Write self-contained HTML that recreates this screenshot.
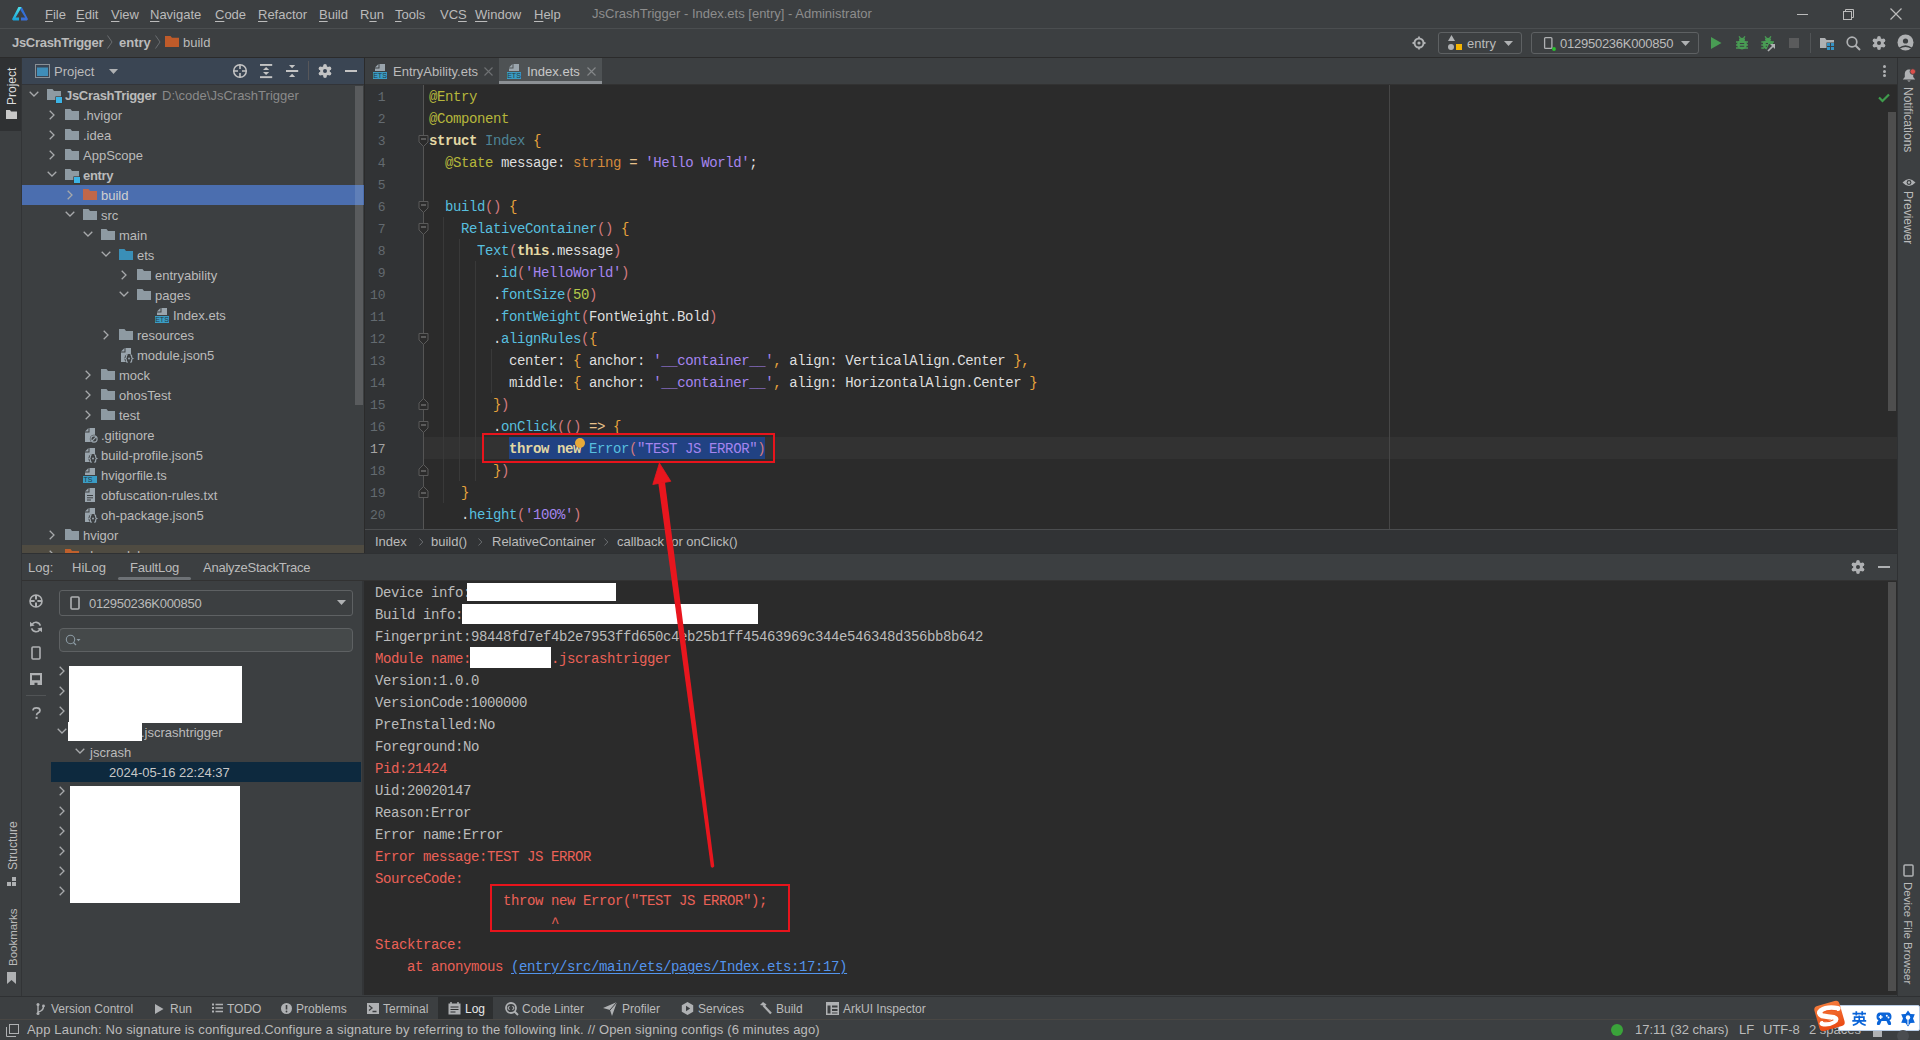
<!DOCTYPE html>
<html><head><meta charset="utf-8">
<style>
*{margin:0;padding:0;box-sizing:border-box}
html,body{width:1920px;height:1040px;overflow:hidden;background:#3c3f41}
body{position:relative;font-family:"Liberation Sans",sans-serif;font-size:13px;color:#bbbbbb}
.a{position:absolute}
.t{position:absolute;white-space:pre;line-height:16px}
.r{position:absolute;white-space:pre;line-height:20px;height:20px}
.m{font-family:"Liberation Mono",monospace;font-size:14px;letter-spacing:-0.4px}
.ln{position:absolute;white-space:pre;line-height:22px;height:22px}
svg{position:absolute;overflow:visible;z-index:3}
u{text-decoration:underline;text-underline-offset:2px}
</style></head><body>
<!-- TITLE BAR -->
<div class="a" style="left:0;top:28px;width:1920px;height:1px;background:#4b4e50"></div>
<div class="a" style="left:0;top:57px;width:1920px;height:1px;background:#2b2b2b"></div>
<svg style="left:0;top:0" width="40" height="28" viewBox="0 0 40 28">
<defs><linearGradient id="lg1" x1="0" y1="0" x2="0" y2="1"><stop offset="0" stop-color="#4fe0ea"/><stop offset="1" stop-color="#16a0d8"/></linearGradient>
<linearGradient id="lg2" x1="0" y1="0" x2="1" y2="1"><stop offset="0" stop-color="#2a6fd6"/><stop offset="1" stop-color="#3f6fd8"/></linearGradient></defs>
<path d="M18.4 7 L21.8 7 L15.6 17.6 L19 17.6 L19 20.6 L13.2 20.6 L12 19.2 Z" fill="url(#lg1)"/>
<path d="M21.8 7 L20.2 9.8 L25.2 17.6 L21 17.6 L21 20.6 L26.8 20.6 L28 19.2 Z" fill="url(#lg2)"/>
</svg>
<div class="t" style="left:45px;top:7px"><u>F</u>ile</div>
<div class="t" style="left:76px;top:7px"><u>E</u>dit</div>
<div class="t" style="left:111px;top:7px"><u>V</u>iew</div>
<div class="t" style="left:150px;top:7px"><u>N</u>avigate</div>
<div class="t" style="left:215px;top:7px"><u>C</u>ode</div>
<div class="t" style="left:258px;top:7px"><u>R</u>efactor</div>
<div class="t" style="left:319px;top:7px"><u>B</u>uild</div>
<div class="t" style="left:360px;top:7px">R<u>u</u>n</div>
<div class="t" style="left:395px;top:7px"><u>T</u>ools</div>
<div class="t" style="left:440px;top:7px">VC<u>S</u></div>
<div class="t" style="left:475px;top:7px"><u>W</u>indow</div>
<div class="t" style="left:534px;top:7px"><u>H</u>elp</div>
<div class="t" style="left:592px;top:6px;color:#8d8d8d">JsCrashTrigger - Index.ets [entry] - Administrator</div>
<div class="a" style="left:1797px;top:14px;width:11px;height:1px;background:#bbbbbb"></div>
<svg style="left:1843px;top:9px" width="12" height="12" viewBox="0 0 12 12"><rect x="0.5" y="2.5" width="8" height="8" fill="none" stroke="#bbb"/><path d="M2.5 2.5 V0.5 H10.5 V8.5 H8.5" fill="none" stroke="#bbb"/></svg>
<svg style="left:1890px;top:8px" width="12" height="12" viewBox="0 0 12 12"><path d="M0.5 0.5 L11.5 11.5 M11.5 0.5 L0.5 11.5" stroke="#bbb" stroke-width="1.2"/></svg>

<!-- NAV BAR -->
<div class="t" style="left:12px;top:35px;font-weight:bold;letter-spacing:-0.3px">JsCrashTrigger</div>
<svg style="left:106px;top:35px" width="8" height="14"><path d="M1.5 0.5 L6 7 L1.5 13.5" fill="none" stroke="#6a6d70" stroke-width="1"/></svg>
<div class="t" style="left:119px;top:35px;font-weight:bold">entry</div>
<svg style="left:154px;top:35px" width="8" height="14"><path d="M1.5 0.5 L6 7 L1.5 13.5" fill="none" stroke="#6a6d70" stroke-width="1"/></svg>
<svg style="left:165px;top:36px" width="14" height="11" viewBox="0 0 14 11"><path d="M0 0 H5.5 L7 1.8 H14 V11 H0 Z" fill="#bf5b2a"/></svg>
<div class="t" style="left:183px;top:35px">build</div>

<svg style="left:1412px;top:36px" width="14" height="14" viewBox="0 0 14 14"><circle cx="7" cy="7" r="4.5" fill="none" stroke="#afb1b3" stroke-width="2"/><circle cx="7" cy="7" r="1.6" fill="#afb1b3"/><path d="M7 0.5 V2.5 M7 11.5 V13.5 M0.5 7 H2.5 M11.5 7 H13.5" stroke="#afb1b3" stroke-width="1.8"/></svg>
<div class="a" style="left:1438px;top:32px;width:84px;height:22px;border:1px solid #5e6163;border-radius:3px"></div>
<svg style="left:1447px;top:35px" width="16" height="16" viewBox="0 0 16 16"><path d="M4.5 0 L8 6 H1 Z" fill="#afb1b3"/><circle cx="4" cy="12" r="3" fill="#afb1b3"/><rect x="9" y="9" width="6" height="6" fill="#f4b400"/></svg>
<div class="t" style="left:1467px;top:36px">entry</div>
<svg style="left:1504px;top:41px" width="9" height="5"><path d="M0 0 H9 L4.5 5 Z" fill="#afb1b3"/></svg>
<div class="a" style="left:1531px;top:32px;width:168px;height:22px;border:1px solid #5e6163;border-radius:3px"></div>
<svg style="left:1543px;top:36px" width="14" height="15" viewBox="0 0 14 15"><rect x="1.6" y="1.6" width="7.3" height="10.8" rx="1" fill="none" stroke="#afb1b3" stroke-width="1.3"/><circle cx="11" cy="13" r="1.9" fill="#29c32e"/></svg>
<div class="t" style="left:1560px;top:36px;letter-spacing:-0.25px">012950236K000850</div>
<svg style="left:1681px;top:41px" width="9" height="5"><path d="M0 0 H9 L4.5 5 Z" fill="#afb1b3"/></svg>
<svg style="left:1711px;top:37px" width="11" height="12" viewBox="0 0 11 12"><path d="M0 0 L10.5 6 L0 12 Z" fill="#499c54"/></svg>
<svg style="left:1735px;top:36px" width="14" height="14" viewBox="0 0 14 14"><path d="M4 0.3 L5.6 2.4 M10 0.3 L8.4 2.4" stroke="#499c54" stroke-width="1.3"/><ellipse cx="7" cy="3.6" rx="3" ry="1.8" fill="#499c54"/><ellipse cx="7" cy="8.6" rx="5" ry="4.8" fill="#499c54"/><path d="M1 6 H13 M1 9 H13 M1 12 H13" stroke="#499c54" stroke-width="1.3"/><path d="M4.8 7.5 H9.2 M4.8 10.3 H9.2" stroke="#3c3f41" stroke-width="1.1"/></svg>
<svg style="left:1761px;top:36px" width="16" height="16" viewBox="0 0 16 16"><path d="M4 0.3 L5.6 2.4 M10 0.3 L8.4 2.4" stroke="#499c54" stroke-width="1.3"/><ellipse cx="7" cy="3.6" rx="3" ry="1.8" fill="#499c54"/><path d="M2 6.5 Q2 4.5 7 4.5 Q12 4.5 12 6.5 V8 H8 L5.5 13.4 Q2 12.5 2 9 Z" fill="#499c54"/><path d="M0.3 6 H3 M0.3 9 H3 M0.3 12 H3 M11 6 H13" stroke="#499c54" stroke-width="1.3"/><path d="M4.8 7.5 H7 M4.8 10.3 H6" stroke="#3c3f41" stroke-width="1.1"/><path d="M7 15 L13.2 8.8" stroke="#afb1b3" stroke-width="1.7"/><path d="M9 8 H14 V13 Z" fill="#afb1b3"/></svg>
<div class="a" style="left:1789px;top:38px;width:10px;height:10px;background:#5a5b5c"></div>
<div class="a" style="left:1810px;top:33px;width:1px;height:20px;background:#515456"></div>
<svg style="left:1820px;top:38px" width="15" height="13" viewBox="0 0 15 13"><path d="M0 0 H5 L6.5 2 H14 V4.5 H6.5 V10 H0 Z" fill="#afb1b3"/><rect x="7" y="5" width="3" height="3" fill="#3592c4"/><rect x="11" y="5" width="3" height="3" fill="#3592c4"/><rect x="7" y="9" width="3" height="3" fill="#3592c4"/><rect x="11" y="9" width="3" height="3" fill="#3592c4"/></svg>
<svg style="left:1846px;top:36px" width="15" height="15" viewBox="0 0 15 15"><circle cx="6" cy="6" r="4.8" fill="none" stroke="#afb1b3" stroke-width="1.7"/><path d="M9.5 9.5 L14 14" stroke="#afb1b3" stroke-width="2"/></svg>
<svg style="left:1872px;top:36px" width="14" height="14" viewBox="0 0 14 14"><circle cx="7" cy="7" r="4.9" fill="#afb1b3"/><circle cx="7.00" cy="1.90" r="1.9" fill="#afb1b3"/><circle cx="2.58" cy="4.45" r="1.9" fill="#afb1b3"/><circle cx="2.58" cy="9.55" r="1.9" fill="#afb1b3"/><circle cx="7.00" cy="12.10" r="1.9" fill="#afb1b3"/><circle cx="11.42" cy="9.55" r="1.9" fill="#afb1b3"/><circle cx="11.42" cy="4.45" r="1.9" fill="#afb1b3"/><circle cx="7" cy="7" r="2.0" fill="#3c3f41"/></svg>
<svg style="left:1897px;top:34px" width="17" height="17" viewBox="0 0 17 17"><circle cx="8.5" cy="8.5" r="8" fill="#afb1b3"/><circle cx="8.5" cy="7" r="2.6" fill="#3c3f41"/><path d="M1.8 13.8 Q8.5 8.8 15.2 13.8 L14.6 15 Q8.5 11.2 2.4 15 Z" fill="#3c3f41"/></svg>

<!-- PROJECT PANEL -->
<div class="a" style="left:0;top:58px;width:22px;height:937px;background:#3c3f41"></div>
<div class="a" style="left:0;top:58px;width:22px;height:73px;background:#2f3133"></div>
<div class="a" style="left:22px;top:58px;width:342px;height:26px;background:#3a4553"></div>
<div class="a" style="left:22px;top:84px;width:342px;height:1px;background:#323438"></div>
<div class="a" style="left:364px;top:58px;width:1px;height:937px;background:#2b2b2b"></div>
<div class="a" style="left:0;top:85px;width:364px;height:468px;overflow:hidden">
<div class="a" style="left:355px;top:1px;width:8px;height:319px;background:#595b5d"></div>
<svg style="left:28.5px;top:6px" width="10" height="7"><path d="M0.7 0.7 L5 5 L9.3 0.7" fill="none" stroke="#a7a9ab" stroke-width="1.3"/></svg>
<svg style="left:47px;top:4px" width="16" height="15" viewBox="0 0 16 15"><path d="M0 0 H5.5 L7 2 H14 V7.5 H8.5 V11 H0 Z" fill="#8e9aa2"/><rect x="8.5" y="7.5" width="7" height="7" fill="#2b2b2b" opacity="0.5"/><rect x="9" y="8" width="6" height="6" fill="#3cb4e6"/></svg>
<div class="r" style="left:65px;top:1px;font-weight:bold;letter-spacing:-0.3px;color:#bbbbbb;z-index:3">JsCrashTrigger</div>
<div class="r" style="left:162px;top:1px;color:#8a8a8a">D:\code\JsCrashTrigger</div>
<svg style="left:48.5px;top:25px" width="7" height="10"><path d="M0.7 0.7 L5 5 L0.7 9.3" fill="none" stroke="#a7a9ab" stroke-width="1.3"/></svg>
<svg style="left:65px;top:24px" width="14" height="11" viewBox="0 0 14 11"><path d="M0 0 H5.5 L7 2 H14 V11 H0 Z" fill="#8e9aa2"/></svg>
<div class="r" style="left:83px;top:21px;color:#bbbbbb;z-index:3">.hvigor</div>
<svg style="left:48.5px;top:45px" width="7" height="10"><path d="M0.7 0.7 L5 5 L0.7 9.3" fill="none" stroke="#a7a9ab" stroke-width="1.3"/></svg>
<svg style="left:65px;top:44px" width="14" height="11" viewBox="0 0 14 11"><path d="M0 0 H5.5 L7 2 H14 V11 H0 Z" fill="#8e9aa2"/></svg>
<div class="r" style="left:83px;top:41px;color:#bbbbbb;z-index:3">.idea</div>
<svg style="left:48.5px;top:65px" width="7" height="10"><path d="M0.7 0.7 L5 5 L0.7 9.3" fill="none" stroke="#a7a9ab" stroke-width="1.3"/></svg>
<svg style="left:65px;top:64px" width="14" height="11" viewBox="0 0 14 11"><path d="M0 0 H5.5 L7 2 H14 V11 H0 Z" fill="#8e9aa2"/></svg>
<div class="r" style="left:83px;top:61px;color:#bbbbbb;z-index:3">AppScope</div>
<svg style="left:46.5px;top:86px" width="10" height="7"><path d="M0.7 0.7 L5 5 L9.3 0.7" fill="none" stroke="#a7a9ab" stroke-width="1.3"/></svg>
<svg style="left:65px;top:84px" width="16" height="15" viewBox="0 0 16 15"><path d="M0 0 H5.5 L7 2 H14 V7.5 H8.5 V11 H0 Z" fill="#8e9aa2"/><rect x="8.5" y="7.5" width="7" height="7" fill="#2b2b2b" opacity="0.5"/><rect x="9" y="8" width="6" height="6" fill="#3cb4e6"/></svg>
<div class="r" style="left:83px;top:81px;font-weight:bold;letter-spacing:-0.3px;color:#bbbbbb;z-index:3">entry</div>
<div class="a" style="left:22px;top:100px;width:342px;height:20px;background:#4b6eaf;z-index:2"></div>
<div class="a" style="left:355px;top:100px;width:8px;height:20px;background:#5f7fb8;z-index:2"></div>
<svg style="left:66.5px;top:105px" width="7" height="10"><path d="M0.7 0.7 L5 5 L0.7 9.3" fill="none" stroke="#a7a9ab" stroke-width="1.3"/></svg>
<svg style="left:83px;top:104px" width="14" height="11" viewBox="0 0 14 11"><path d="M0 0 H5.5 L7 2 H14 V11 H0 Z" fill="#c0674a"/></svg>
<div class="r" style="left:101px;top:101px;color:#d0d0d0;z-index:3">build</div>
<svg style="left:64.5px;top:126px" width="10" height="7"><path d="M0.7 0.7 L5 5 L9.3 0.7" fill="none" stroke="#a7a9ab" stroke-width="1.3"/></svg>
<svg style="left:83px;top:124px" width="14" height="11" viewBox="0 0 14 11"><path d="M0 0 H5.5 L7 2 H14 V11 H0 Z" fill="#8e9aa2"/></svg>
<div class="r" style="left:101px;top:121px;color:#bbbbbb;z-index:3">src</div>
<svg style="left:82.5px;top:146px" width="10" height="7"><path d="M0.7 0.7 L5 5 L9.3 0.7" fill="none" stroke="#a7a9ab" stroke-width="1.3"/></svg>
<svg style="left:101px;top:144px" width="14" height="11" viewBox="0 0 14 11"><path d="M0 0 H5.5 L7 2 H14 V11 H0 Z" fill="#8e9aa2"/></svg>
<div class="r" style="left:119px;top:141px;color:#bbbbbb;z-index:3">main</div>
<svg style="left:100.5px;top:166px" width="10" height="7"><path d="M0.7 0.7 L5 5 L9.3 0.7" fill="none" stroke="#a7a9ab" stroke-width="1.3"/></svg>
<svg style="left:119px;top:164px" width="14" height="11" viewBox="0 0 14 11"><path d="M0 0 H5.5 L7 2 H14 V11 H0 Z" fill="#3a8fb7"/></svg>
<div class="r" style="left:137px;top:161px;color:#bbbbbb;z-index:3">ets</div>
<svg style="left:120.5px;top:185px" width="7" height="10"><path d="M0.7 0.7 L5 5 L0.7 9.3" fill="none" stroke="#a7a9ab" stroke-width="1.3"/></svg>
<svg style="left:137px;top:184px" width="14" height="11" viewBox="0 0 14 11"><path d="M0 0 H5.5 L7 2 H14 V11 H0 Z" fill="#8e9aa2"/></svg>
<div class="r" style="left:155px;top:181px;color:#bbbbbb;z-index:3">entryability</div>
<svg style="left:118.5px;top:206px" width="10" height="7"><path d="M0.7 0.7 L5 5 L9.3 0.7" fill="none" stroke="#a7a9ab" stroke-width="1.3"/></svg>
<svg style="left:137px;top:204px" width="14" height="11" viewBox="0 0 14 11"><path d="M0 0 H5.5 L7 2 H14 V11 H0 Z" fill="#8e9aa2"/></svg>
<div class="r" style="left:155px;top:201px;color:#bbbbbb;z-index:3">pages</div>
<svg style="left:155px;top:223px" width="16" height="15" viewBox="0 0 16 15"><path d="M2 3.5 L5.5 0 V3.5 Z" fill="#9aa5ad"/><path d="M6.5 0 H12 V7 H2 V4.5 H6.5 Z" fill="#9aa5ad"/><rect x="0" y="8" width="14" height="7" fill="#3a9cc4"/><text x="7" y="14.3" font-family="Liberation Sans" font-size="7" text-anchor="middle" fill="#263a44">ETS</text></svg>
<div class="r" style="left:173px;top:221px;color:#bbbbbb;z-index:3">Index.ets</div>
<svg style="left:102.5px;top:245px" width="7" height="10"><path d="M0.7 0.7 L5 5 L0.7 9.3" fill="none" stroke="#a7a9ab" stroke-width="1.3"/></svg>
<svg style="left:119px;top:244px" width="14" height="11" viewBox="0 0 14 11"><path d="M0 0 H5.5 L7 2 H14 V11 H0 Z" fill="#8e9aa2"/></svg>
<div class="r" style="left:137px;top:241px;color:#bbbbbb;z-index:3">resources</div>
<svg style="left:119px;top:263px" width="16" height="15" viewBox="0 0 16 15"><path d="M2 3.5 L5.5 0 V3.5 Z" fill="#9aa5ad"/><path d="M6.5 0 H12 V14 H2 V4.5 H6.5 Z" fill="#9aa5ad"/><circle cx="10" cy="10.5" r="4.6" fill="#3c3f41"/><path d="M8.8 6.8 Q7.2 6.8 7.4 8.5 Q7.5 10 6.3 10.5 Q7.5 11 7.4 12.5 Q7.2 14.2 8.8 14.2 M11.2 6.8 Q12.8 6.8 12.6 8.5 Q12.5 10 13.7 10.5 Q12.5 11 12.6 12.5 Q12.8 14.2 11.2 14.2" fill="none" stroke="#9aa5ad" stroke-width="1.2"/><circle cx="10" cy="10.5" r="1" fill="#9aa5ad"/></svg>
<div class="r" style="left:137px;top:261px;color:#bbbbbb;z-index:3">module.json5</div>
<svg style="left:84.5px;top:285px" width="7" height="10"><path d="M0.7 0.7 L5 5 L0.7 9.3" fill="none" stroke="#a7a9ab" stroke-width="1.3"/></svg>
<svg style="left:101px;top:284px" width="14" height="11" viewBox="0 0 14 11"><path d="M0 0 H5.5 L7 2 H14 V11 H0 Z" fill="#8e9aa2"/></svg>
<div class="r" style="left:119px;top:281px;color:#bbbbbb;z-index:3">mock</div>
<svg style="left:84.5px;top:305px" width="7" height="10"><path d="M0.7 0.7 L5 5 L0.7 9.3" fill="none" stroke="#a7a9ab" stroke-width="1.3"/></svg>
<svg style="left:101px;top:304px" width="14" height="11" viewBox="0 0 14 11"><path d="M0 0 H5.5 L7 2 H14 V11 H0 Z" fill="#8e9aa2"/></svg>
<div class="r" style="left:119px;top:301px;color:#bbbbbb;z-index:3">ohosTest</div>
<svg style="left:84.5px;top:325px" width="7" height="10"><path d="M0.7 0.7 L5 5 L0.7 9.3" fill="none" stroke="#a7a9ab" stroke-width="1.3"/></svg>
<svg style="left:101px;top:324px" width="14" height="11" viewBox="0 0 14 11"><path d="M0 0 H5.5 L7 2 H14 V11 H0 Z" fill="#8e9aa2"/></svg>
<div class="r" style="left:119px;top:321px;color:#bbbbbb;z-index:3">test</div>
<svg style="left:83px;top:343px" width="16" height="15" viewBox="0 0 16 15"><path d="M2 3.5 L5.5 0 V3.5 Z" fill="#9aa5ad"/><path d="M6.5 0 H12 V14 H2 V4.5 H6.5 Z" fill="#9aa5ad"/><circle cx="11" cy="11" r="4.2" fill="#3c3f41"/><circle cx="11" cy="11" r="3.1" fill="none" stroke="#9aa5ad" stroke-width="1.2"/><path d="M8.9 13.1 L13.1 8.9" stroke="#9aa5ad" stroke-width="1.2"/></svg>
<div class="r" style="left:101px;top:341px;color:#bbbbbb;z-index:3">.gitignore</div>
<svg style="left:83px;top:363px" width="16" height="15" viewBox="0 0 16 15"><path d="M2 3.5 L5.5 0 V3.5 Z" fill="#9aa5ad"/><path d="M6.5 0 H12 V14 H2 V4.5 H6.5 Z" fill="#9aa5ad"/><circle cx="10" cy="10.5" r="4.6" fill="#3c3f41"/><path d="M8.8 6.8 Q7.2 6.8 7.4 8.5 Q7.5 10 6.3 10.5 Q7.5 11 7.4 12.5 Q7.2 14.2 8.8 14.2 M11.2 6.8 Q12.8 6.8 12.6 8.5 Q12.5 10 13.7 10.5 Q12.5 11 12.6 12.5 Q12.8 14.2 11.2 14.2" fill="none" stroke="#9aa5ad" stroke-width="1.2"/><circle cx="10" cy="10.5" r="1" fill="#9aa5ad"/></svg>
<div class="r" style="left:101px;top:361px;color:#bbbbbb;z-index:3">build-profile.json5</div>
<svg style="left:83px;top:383px" width="16" height="15" viewBox="0 0 16 15"><path d="M2 3.5 L5.5 0 V3.5 Z" fill="#9aa5ad"/><path d="M6.5 0 H12 V7 H2 V4.5 H6.5 Z" fill="#9aa5ad"/><rect x="0" y="8" width="14" height="7" fill="#3a9cc4"/><text x="5" y="14.3" font-family="Liberation Sans" font-size="7" text-anchor="middle" fill="#263a44">TS</text></svg>
<div class="r" style="left:101px;top:381px;color:#bbbbbb;z-index:3">hvigorfile.ts</div>
<svg style="left:83px;top:403px" width="16" height="15" viewBox="0 0 16 15"><path d="M2 3.5 L5.5 0 V3.5 Z" fill="#9aa5ad"/><path d="M6.5 0 H12 V14 H2 V4.5 H6.5 Z" fill="#9aa5ad"/><path d="M4 7.5 H10 M4 9.8 H10 M4 12 H8" stroke="#3c3f41" stroke-width="1"/></svg>
<div class="r" style="left:101px;top:401px;color:#bbbbbb;z-index:3">obfuscation-rules.txt</div>
<svg style="left:83px;top:423px" width="16" height="15" viewBox="0 0 16 15"><path d="M2 3.5 L5.5 0 V3.5 Z" fill="#9aa5ad"/><path d="M6.5 0 H12 V14 H2 V4.5 H6.5 Z" fill="#9aa5ad"/><circle cx="10" cy="10.5" r="4.6" fill="#3c3f41"/><path d="M8.8 6.8 Q7.2 6.8 7.4 8.5 Q7.5 10 6.3 10.5 Q7.5 11 7.4 12.5 Q7.2 14.2 8.8 14.2 M11.2 6.8 Q12.8 6.8 12.6 8.5 Q12.5 10 13.7 10.5 Q12.5 11 12.6 12.5 Q12.8 14.2 11.2 14.2" fill="none" stroke="#9aa5ad" stroke-width="1.2"/><circle cx="10" cy="10.5" r="1" fill="#9aa5ad"/></svg>
<div class="r" style="left:101px;top:421px;color:#bbbbbb;z-index:3">oh-package.json5</div>
<svg style="left:48.5px;top:445px" width="7" height="10"><path d="M0.7 0.7 L5 5 L0.7 9.3" fill="none" stroke="#a7a9ab" stroke-width="1.3"/></svg>
<svg style="left:65px;top:444px" width="14" height="11" viewBox="0 0 14 11"><path d="M0 0 H5.5 L7 2 H14 V11 H0 Z" fill="#8e9aa2"/></svg>
<div class="r" style="left:83px;top:441px;color:#bbbbbb;z-index:3">hvigor</div>
<div class="a" style="left:22px;top:460px;width:342px;height:20px;background:#4f4b41"></div>
<svg style="left:48.5px;top:465px" width="7" height="10"><path d="M0.7 0.7 L5 5 L0.7 9.3" fill="none" stroke="#a7a9ab" stroke-width="1.3"/></svg>
<svg style="left:65px;top:464px" width="14" height="11" viewBox="0 0 14 11"><path d="M0 0 H5.5 L7 2 H14 V11 H0 Z" fill="#c0602c"/></svg>
<div class="r" style="left:83px;top:461px;color:#bbbbbb;z-index:3">oh_modules</div>
</div>
<svg style="left:35px;top:64px" width="15" height="14" viewBox="0 0 15 14"><rect x="0.5" y="0.5" width="14" height="13" fill="none" stroke="#8a9096"/><rect x="2" y="3.5" width="11" height="8.5" fill="#3f8db8"/></svg>
<div class="t" style="left:54px;top:64px">Project</div>
<svg style="left:109px;top:69px" width="9" height="5"><path d="M0 0 H9 L4.5 5 Z" fill="#afb1b3"/></svg>
<svg style="left:232px;top:63px" width="16" height="16" viewBox="0 0 16 16"><circle cx="8" cy="8" r="6.3" fill="none" stroke="#c4c4c4" stroke-width="1.5"/><path d="M8 1.5 V6 M8 10 V14.5 M1.5 8 H6 M10 8 H14.5" stroke="#c4c4c4" stroke-width="1.6"/></svg>
<svg style="left:260px;top:63px" width="13" height="16" viewBox="0 0 13 16"><rect x="0" y="1" width="12.2" height="1.9" fill="#c4c4c4"/><rect x="0" y="13.2" width="12.2" height="1.9" fill="#c4c4c4"/><path d="M3 6.9 L6.1 3.9 L9.2 6.9 Z M3 9.1 L6.1 12.1 L9.2 9.1 Z" fill="#c4c4c4"/></svg>
<svg style="left:286px;top:63px" width="13" height="16" viewBox="0 0 13 16"><rect x="0" y="7" width="12.2" height="2" fill="#c4c4c4"/><path d="M3 2 L9.2 2 L6.1 5.2 Z M3 14 L9.2 14 L6.1 10.8 Z" fill="#c4c4c4"/></svg>
<div class="a" style="left:308px;top:61px;width:1px;height:19px;background:#57575a"></div>
<svg style="left:318px;top:64px" width="14" height="14" viewBox="0 0 14 14"><circle cx="7" cy="7" r="4.9" fill="#c4c4c4"/><circle cx="7.00" cy="1.90" r="1.9" fill="#c4c4c4"/><circle cx="2.58" cy="4.45" r="1.9" fill="#c4c4c4"/><circle cx="2.58" cy="9.55" r="1.9" fill="#c4c4c4"/><circle cx="7.00" cy="12.10" r="1.9" fill="#c4c4c4"/><circle cx="11.42" cy="9.55" r="1.9" fill="#c4c4c4"/><circle cx="11.42" cy="4.45" r="1.9" fill="#c4c4c4"/><circle cx="7" cy="7" r="2.0" fill="#3a4553"/></svg>
<div class="a" style="left:345px;top:70px;width:12px;height:2px;background:#c4c4c4"></div>
<div class="t" style="left:4px;top:105px;transform-origin:0 0;transform:rotate(-90deg);color:#dddddd;font-size:12px;width:60px">Project</div>
<svg style="left:6px;top:110px" width="11" height="9"><path d="M0 0 H4 L5 1.5 H11 V9 H0 Z" fill="#c8c8c8"/></svg>
<!-- EDITOR -->
<div class="a" style="left:365px;top:58px;width:1532px;height:26px;background:#3c3f41"></div>
<div class="a" style="left:365px;top:84px;width:1532px;height:1px;background:#323232"></div>
<div class="a" style="left:499px;top:58px;width:103px;height:26px;background:#4e5254"></div>
<div class="a" style="left:499px;top:81px;width:103px;height:3px;background:#8c9094"></div>
<svg style="left:373px;top:64px" width="16" height="15" viewBox="0 0 16 15"><path d="M2 3.5 L5.5 0 V3.5 Z" fill="#9aa5ad"/><path d="M6.5 0 H12 V7 H2 V4.5 H6.5 Z" fill="#9aa5ad"/><rect x="0" y="8" width="14" height="7" fill="#3a9cc4"/><text x="7" y="14.3" font-family="Liberation Sans" font-size="7" text-anchor="middle" fill="#263a44">ETS</text></svg>
<div class="t" style="left:393px;top:64px">EntryAbility.ets</div>
<svg style="left:484px;top:67px" width="9" height="9"><path d="M0.5 0.5 L8.5 8.5 M8.5 0.5 L0.5 8.5" stroke="#6e7173" stroke-width="1.1"/></svg>
<svg style="left:507px;top:64px" width="16" height="15" viewBox="0 0 16 15"><path d="M2 3.5 L5.5 0 V3.5 Z" fill="#9aa5ad"/><path d="M6.5 0 H12 V7 H2 V4.5 H6.5 Z" fill="#9aa5ad"/><rect x="0" y="8" width="14" height="7" fill="#3a9cc4"/><text x="7" y="14.3" font-family="Liberation Sans" font-size="7" text-anchor="middle" fill="#263a44">ETS</text></svg>
<div class="t" style="left:527px;top:64px;color:#c8c8c8">Index.ets</div>
<svg style="left:587px;top:67px" width="9" height="9"><path d="M0.5 0.5 L8.5 8.5 M8.5 0.5 L0.5 8.5" stroke="#85888a" stroke-width="1.1"/></svg>
<div class="a" style="left:1883px;top:65px;width:3px;height:3px;border-radius:50%;background:#afb1b3"></div>
<div class="a" style="left:1883px;top:70px;width:3px;height:3px;border-radius:50%;background:#afb1b3"></div>
<div class="a" style="left:1883px;top:74px;width:3px;height:3px;border-radius:50%;background:#afb1b3"></div>
<div class="a" style="left:365px;top:85px;width:1532px;height:444px;background:#2b2b2b;overflow:hidden">
<div class="a" style="left:0;top:0;width:58px;height:444px;background:#313335"></div>
<div class="a" style="left:59px;top:352px;width:1473px;height:22px;background:#323232"></div>
<div class="a" style="left:1024px;top:0;width:1px;height:444px;background:#464646"></div>
<div class="a" style="left:58px;top:0;width:1px;height:444px;background:#555555"></div>
<div class="a" style="left:78px;top:132px;width:1px;height:286px;background:#393939"></div>
<div class="a" style="left:94px;top:154px;width:1px;height:242px;background:#393939"></div>
<div class="a" style="left:110px;top:176px;width:1px;height:220px;background:#393939"></div>
<div class="a" style="left:126px;top:264px;width:1px;height:44px;background:#393939"></div>
<div class="a" style="left:144px;top:352px;width:256px;height:22px;background:#214283"></div>
<div class="ln m" style="left:0;top:2px;width:20.5px;text-align:right;color:#636a70;font-size:13px;letter-spacing:0">1</div>
<div class="ln m" style="left:0;top:24px;width:20.5px;text-align:right;color:#636a70;font-size:13px;letter-spacing:0">2</div>
<div class="ln m" style="left:0;top:46px;width:20.5px;text-align:right;color:#636a70;font-size:13px;letter-spacing:0">3</div>
<div class="ln m" style="left:0;top:68px;width:20.5px;text-align:right;color:#636a70;font-size:13px;letter-spacing:0">4</div>
<div class="ln m" style="left:0;top:90px;width:20.5px;text-align:right;color:#636a70;font-size:13px;letter-spacing:0">5</div>
<div class="ln m" style="left:0;top:112px;width:20.5px;text-align:right;color:#636a70;font-size:13px;letter-spacing:0">6</div>
<div class="ln m" style="left:0;top:134px;width:20.5px;text-align:right;color:#636a70;font-size:13px;letter-spacing:0">7</div>
<div class="ln m" style="left:0;top:156px;width:20.5px;text-align:right;color:#636a70;font-size:13px;letter-spacing:0">8</div>
<div class="ln m" style="left:0;top:178px;width:20.5px;text-align:right;color:#636a70;font-size:13px;letter-spacing:0">9</div>
<div class="ln m" style="left:0;top:200px;width:20.5px;text-align:right;color:#636a70;font-size:13px;letter-spacing:0">10</div>
<div class="ln m" style="left:0;top:222px;width:20.5px;text-align:right;color:#636a70;font-size:13px;letter-spacing:0">11</div>
<div class="ln m" style="left:0;top:244px;width:20.5px;text-align:right;color:#636a70;font-size:13px;letter-spacing:0">12</div>
<div class="ln m" style="left:0;top:266px;width:20.5px;text-align:right;color:#636a70;font-size:13px;letter-spacing:0">13</div>
<div class="ln m" style="left:0;top:288px;width:20.5px;text-align:right;color:#636a70;font-size:13px;letter-spacing:0">14</div>
<div class="ln m" style="left:0;top:310px;width:20.5px;text-align:right;color:#636a70;font-size:13px;letter-spacing:0">15</div>
<div class="ln m" style="left:0;top:332px;width:20.5px;text-align:right;color:#636a70;font-size:13px;letter-spacing:0">16</div>
<div class="ln m" style="left:0;top:354px;width:20.5px;text-align:right;color:#a4a3a3;font-size:13px;letter-spacing:0">17</div>
<div class="ln m" style="left:0;top:376px;width:20.5px;text-align:right;color:#636a70;font-size:13px;letter-spacing:0">18</div>
<div class="ln m" style="left:0;top:398px;width:20.5px;text-align:right;color:#636a70;font-size:13px;letter-spacing:0">19</div>
<div class="ln m" style="left:0;top:420px;width:20.5px;text-align:right;color:#636a70;font-size:13px;letter-spacing:0">20</div>
<div class="ln m" style="left:64px;top:1px"><span style="color:#b7b73b">@Entry</span></div>
<div class="ln m" style="left:64px;top:23px"><span style="color:#b7b73b">@Component</span></div>
<div class="ln m" style="left:64px;top:45px"><span style="font-weight:bold;color:#e3d7a3">struct</span> <span style="color:#4e8395">Index</span> <span style="color:#e8a33c">{</span></div>
<div class="ln m" style="left:64px;top:67px">  <span style="color:#b7b73b">@State</span> <span style="color:#dedede">message</span><span style="color:#dedede">:</span> <span style="color:#d48a3c">string</span> <span style="color:#e8c18a">=</span> <span style="color:#a585ef">&#x27;Hello World&#x27;</span><span style="color:#dedede">;</span></div>
<div class="ln m" style="left:64px;top:89px"></div>
<div class="ln m" style="left:64px;top:111px">  <span style="color:#57bfdf">build</span><span style="color:#d27a7e">()</span> <span style="color:#e8a33c">{</span></div>
<div class="ln m" style="left:64px;top:133px">    <span style="color:#57bfdf">RelativeContainer</span><span style="color:#d27a7e">()</span> <span style="color:#e8a33c">{</span></div>
<div class="ln m" style="left:64px;top:155px">      <span style="color:#57bfdf">Text</span><span style="color:#d27a7e">(</span><span style="font-weight:bold;color:#e3d7a3">this</span><span style="color:#dedede">.</span><span style="color:#dedede">message</span><span style="color:#d27a7e">)</span></div>
<div class="ln m" style="left:64px;top:177px">        <span style="color:#dedede">.</span><span style="color:#57bfdf">id</span><span style="color:#d27a7e">(</span><span style="color:#a585ef">&#x27;HelloWorld&#x27;</span><span style="color:#d27a7e">)</span></div>
<div class="ln m" style="left:64px;top:199px">        <span style="color:#dedede">.</span><span style="color:#57bfdf">fontSize</span><span style="color:#d27a7e">(</span><span style="color:#b5c94a">50</span><span style="color:#d27a7e">)</span></div>
<div class="ln m" style="left:64px;top:221px">        <span style="color:#dedede">.</span><span style="color:#57bfdf">fontWeight</span><span style="color:#d27a7e">(</span><span style="color:#dedede">FontWeight.Bold</span><span style="color:#d27a7e">)</span></div>
<div class="ln m" style="left:64px;top:243px">        <span style="color:#dedede">.</span><span style="color:#57bfdf">alignRules</span><span style="color:#d27a7e">(</span><span style="color:#e8a33c">{</span></div>
<div class="ln m" style="left:64px;top:265px">          <span style="color:#dedede">center</span><span style="color:#dedede">:</span> <span style="color:#e8a33c">{</span> <span style="color:#dedede">anchor</span><span style="color:#dedede">:</span> <span style="color:#a585ef">&#x27;__container__&#x27;</span><span style="color:#e8a33c">,</span> <span style="color:#dedede">align</span><span style="color:#dedede">:</span> <span style="color:#dedede">VerticalAlign.Center</span> <span style="color:#e8a33c">}</span><span style="color:#e8a33c">,</span></div>
<div class="ln m" style="left:64px;top:287px">          <span style="color:#dedede">middle</span><span style="color:#dedede">:</span> <span style="color:#e8a33c">{</span> <span style="color:#dedede">anchor</span><span style="color:#dedede">:</span> <span style="color:#a585ef">&#x27;__container__&#x27;</span><span style="color:#e8a33c">,</span> <span style="color:#dedede">align</span><span style="color:#dedede">:</span> <span style="color:#dedede">HorizontalAlign.Center</span> <span style="color:#e8a33c">}</span></div>
<div class="ln m" style="left:64px;top:309px">        <span style="color:#e8a33c">}</span><span style="color:#d27a7e">)</span></div>
<div class="ln m" style="left:64px;top:331px">        <span style="color:#dedede">.</span><span style="color:#57bfdf">onClick</span><span style="color:#d27a7e">(()</span> <span style="color:#e8c18a">=&gt;</span> <span style="color:#e8a33c">{</span></div>
<div class="ln m" style="left:64px;top:353px">          <span style="font-weight:bold;color:#e3d7a3">throw</span> <span style="font-weight:bold;color:#e3d7a3">new</span> <span style="color:#57bfdf">Error</span><span style="color:#d27a7e">(</span><span style="color:#a585ef">&quot;TEST JS ERROR&quot;</span><span style="color:#d27a7e">)</span></div>
<div class="ln m" style="left:64px;top:375px">        <span style="color:#e8a33c">}</span><span style="color:#d27a7e">)</span></div>
<div class="ln m" style="left:64px;top:397px">    <span style="color:#e8a33c">}</span></div>
<div class="ln m" style="left:64px;top:419px">    <span style="color:#dedede">.</span><span style="color:#57bfdf">height</span><span style="color:#d27a7e">(</span><span style="color:#a585ef">&#x27;100%&#x27;</span><span style="color:#d27a7e">)</span></div>
<svg style="left:53px;top:50px" width="11" height="12" viewBox="0 0 11 12"><path d="M1 0.5 H10 V7 L5.5 11.5 L1 7 Z" fill="#2b2b2b" stroke="#5a5a5a"/><path d="M3 4 H8" stroke="#8a8a8a"/></svg>
<svg style="left:53px;top:116px" width="11" height="12" viewBox="0 0 11 12"><path d="M1 0.5 H10 V7 L5.5 11.5 L1 7 Z" fill="#2b2b2b" stroke="#5a5a5a"/><path d="M3 4 H8" stroke="#8a8a8a"/></svg>
<svg style="left:53px;top:138px" width="11" height="12" viewBox="0 0 11 12"><path d="M1 0.5 H10 V7 L5.5 11.5 L1 7 Z" fill="#2b2b2b" stroke="#5a5a5a"/><path d="M3 4 H8" stroke="#8a8a8a"/></svg>
<svg style="left:53px;top:248px" width="11" height="12" viewBox="0 0 11 12"><path d="M1 0.5 H10 V7 L5.5 11.5 L1 7 Z" fill="#2b2b2b" stroke="#5a5a5a"/><path d="M3 4 H8" stroke="#8a8a8a"/></svg>
<svg style="left:53px;top:336px" width="11" height="12" viewBox="0 0 11 12"><path d="M1 0.5 H10 V7 L5.5 11.5 L1 7 Z" fill="#2b2b2b" stroke="#5a5a5a"/><path d="M3 4 H8" stroke="#8a8a8a"/></svg>
<svg style="left:53px;top:313px" width="11" height="12" viewBox="0 0 11 12"><path d="M1 11.5 H10 V5 L5.5 0.5 L1 5 Z" fill="#2b2b2b" stroke="#5a5a5a"/><path d="M3 7 H8" stroke="#8a8a8a"/></svg>
<svg style="left:53px;top:379px" width="11" height="12" viewBox="0 0 11 12"><path d="M1 11.5 H10 V5 L5.5 0.5 L1 5 Z" fill="#2b2b2b" stroke="#5a5a5a"/><path d="M3 7 H8" stroke="#8a8a8a"/></svg>
<svg style="left:53px;top:401px" width="11" height="12" viewBox="0 0 11 12"><path d="M1 11.5 H10 V5 L5.5 0.5 L1 5 Z" fill="#2b2b2b" stroke="#5a5a5a"/><path d="M3 7 H8" stroke="#8a8a8a"/></svg>
<div class="a" style="left:210px;top:353px;width:10px;height:10px;border-radius:50%;background:#e8a93a"></div>
<svg style="left:1513px;top:8px" width="12" height="10" viewBox="0 0 12 10"><path d="M1 4.5 L4.5 8 L11 1.5" fill="none" stroke="#3f9b4c" stroke-width="2.2"/></svg>
<div class="a" style="left:1523px;top:27px;width:8px;height:299px;background:#4e4e4e"></div>
</div>
<div class="a" style="left:482px;top:433px;width:293px;height:30px;border:2px solid #e8141c"></div>
<div class="a" style="left:365px;top:529px;width:1532px;height:1px;background:#4b4d4f"></div>
<div class="a" style="left:365px;top:530px;width:1532px;height:23px;background:#313335"></div>
<div class="t" style="left:375px;top:534px;color:#bbbbbb">Index</div>
<div class="t" style="left:431px;top:534px;color:#bbbbbb">build()</div>
<div class="t" style="left:492px;top:534px;color:#bbbbbb">RelativeContainer</div>
<div class="t" style="left:617px;top:534px;color:#bbbbbb">callback for onClick()</div>
<svg style="left:419px;top:538px" width="5" height="8"><path d="M0.5 0.5 L3.8 4 L0.5 7.5" fill="none" stroke="#6a6d70" stroke-width="1"/></svg>
<svg style="left:478px;top:538px" width="5" height="8"><path d="M0.5 0.5 L3.8 4 L0.5 7.5" fill="none" stroke="#6a6d70" stroke-width="1"/></svg>
<svg style="left:604px;top:538px" width="5" height="8"><path d="M0.5 0.5 L3.8 4 L0.5 7.5" fill="none" stroke="#6a6d70" stroke-width="1"/></svg>
<!-- LOG PANEL -->
<div class="a" style="left:22px;top:553px;width:1875px;height:1px;background:#2f3133"></div>
<div class="a" style="left:22px;top:554px;width:1875px;height:26px;background:#3c3f41"></div>
<div class="a" style="left:22px;top:580px;width:1875px;height:1px;background:#323232"></div>
<div class="t" style="left:28px;top:560px">Log:</div>
<div class="t" style="left:72px;top:560px">HiLog</div>
<div class="t" style="left:130px;top:560px;letter-spacing:-0.2px">FaultLog</div>
<div class="t" style="left:203px;top:560px;letter-spacing:-0.25px">AnalyzeStackTrace</div>
<div class="a" style="left:118px;top:577px;width:73px;height:3px;border-radius:2px;background:#6e7276"></div>
<svg style="left:1851px;top:560px" width="14" height="14" viewBox="0 0 14 14"><circle cx="7" cy="7" r="4.9" fill="#afb1b3"/><circle cx="7.00" cy="1.90" r="1.9" fill="#afb1b3"/><circle cx="2.58" cy="4.45" r="1.9" fill="#afb1b3"/><circle cx="2.58" cy="9.55" r="1.9" fill="#afb1b3"/><circle cx="7.00" cy="12.10" r="1.9" fill="#afb1b3"/><circle cx="11.42" cy="9.55" r="1.9" fill="#afb1b3"/><circle cx="11.42" cy="4.45" r="1.9" fill="#afb1b3"/><circle cx="7" cy="7" r="2.0" fill="#3c3f41"/></svg>
<div class="a" style="left:1878px;top:566px;width:12px;height:2px;background:#afb1b3"></div>
<div class="a" style="left:22px;top:581px;width:342px;height:414px;background:#3c3f41"></div>
<div class="a" style="left:362px;top:581px;width:2px;height:414px;background:#333537"></div>
<svg style="left:29px;top:594px" width="14" height="14" viewBox="0 0 14 14"><circle cx="7" cy="7" r="6" fill="none" stroke="#afb1b3" stroke-width="1.6"/><path d="M7 1 V5.6 M7 8.4 V13 M1 7 H5.6 M8.4 7 H13" stroke="#afb1b3" stroke-width="2"/></svg>
<svg style="left:30px;top:621px" width="12" height="12" viewBox="0 0 12 12"><path d="M10.3 4.6 A4.5 4.5 0 0 0 2 3.6" fill="none" stroke="#afb1b3" stroke-width="1.7"/><path d="M1.7 7.4 A4.5 4.5 0 0 0 10 8.4" fill="none" stroke="#afb1b3" stroke-width="1.7"/><path d="M0 0.8 L4.6 4.4 L0 5.6 Z" fill="#afb1b3"/><path d="M12 11.2 L7.4 7.6 L12 6.4 Z" fill="#afb1b3"/></svg>
<svg style="left:31px;top:646px" width="10" height="14" viewBox="0 0 10 14"><rect x="1" y="1" width="8" height="12" rx="1" fill="none" stroke="#afb1b3" stroke-width="1.6"/></svg>
<svg style="left:30px;top:673px" width="12" height="12" viewBox="0 0 12 12"><path d="M0 0 H12 V12 H0 Z M2 2.2 V7.2 H10 V2.2 Z M4.5 9.8 V12 H7.5 V9.8 Z" fill="#afb1b3" fill-rule="evenodd"/></svg>
<div class="a" style="left:26px;top:695px;width:20px;height:1px;background:#515456"></div>
<svg style="left:32px;top:707px" width="9" height="12" viewBox="0 0 9 12"><path d="M1 3.6 Q1 0.8 4.5 0.8 Q8 0.8 8 3.4 Q8 5 6 6 Q4.6 6.7 4.6 8.3" fill="none" stroke="#afb1b3" stroke-width="1.7"/><rect x="3.6" y="9.8" width="2" height="2" fill="#afb1b3"/></svg>

<div class="a" style="left:59px;top:590px;width:294px;height:26px;border:1px solid #5e6163;border-radius:3px"></div>
<svg style="left:70px;top:596px" width="10" height="14" viewBox="0 0 10 14"><rect x="1" y="1" width="8" height="12" rx="1" fill="none" stroke="#afb1b3" stroke-width="1.6"/></svg>
<div class="t" style="left:89px;top:596px;letter-spacing:-0.3px">012950236K000850</div>
<svg style="left:337px;top:600px" width="9" height="5"><path d="M0 0 H9 L4.5 5 Z" fill="#afb1b3"/></svg>
<div class="a" style="left:59px;top:628px;width:294px;height:24px;border:1px solid #5e6163;border-radius:4px;background:#45494a"></div>
<svg style="left:65px;top:634px" width="16" height="12" viewBox="0 0 16 12"><circle cx="5.5" cy="5.5" r="4.2" fill="none" stroke="#8b9aa3" stroke-width="1.1"/><path d="M8.5 8.5 L11 11" stroke="#8b9aa3" stroke-width="1.3"/><path d="M11.5 5 H15.5 L13.5 7.2 Z" fill="#8b9aa3"/></svg>
<svg style="left:59px;top:666px" width="7" height="10"><path d="M0.7 0.7 L5 5 L0.7 9.3" fill="none" stroke="#a7a9ab" stroke-width="1.3"/></svg>
<svg style="left:59px;top:686px" width="7" height="10"><path d="M0.7 0.7 L5 5 L0.7 9.3" fill="none" stroke="#a7a9ab" stroke-width="1.3"/></svg>
<svg style="left:59px;top:706px" width="7" height="10"><path d="M0.7 0.7 L5 5 L0.7 9.3" fill="none" stroke="#a7a9ab" stroke-width="1.3"/></svg>
<svg style="left:57px;top:728px" width="10" height="7"><path d="M0.7 0.7 L5 5 L9.3 0.7" fill="none" stroke="#a7a9ab" stroke-width="1.3"/></svg>
<svg style="left:75px;top:748px" width="10" height="7"><path d="M0.7 0.7 L5 5 L9.3 0.7" fill="none" stroke="#a7a9ab" stroke-width="1.3"/></svg>
<svg style="left:59px;top:786px" width="7" height="10"><path d="M0.7 0.7 L5 5 L0.7 9.3" fill="none" stroke="#a7a9ab" stroke-width="1.3"/></svg>
<svg style="left:59px;top:806px" width="7" height="10"><path d="M0.7 0.7 L5 5 L0.7 9.3" fill="none" stroke="#a7a9ab" stroke-width="1.3"/></svg>
<svg style="left:59px;top:826px" width="7" height="10"><path d="M0.7 0.7 L5 5 L0.7 9.3" fill="none" stroke="#a7a9ab" stroke-width="1.3"/></svg>
<svg style="left:59px;top:846px" width="7" height="10"><path d="M0.7 0.7 L5 5 L0.7 9.3" fill="none" stroke="#a7a9ab" stroke-width="1.3"/></svg>
<svg style="left:59px;top:866px" width="7" height="10"><path d="M0.7 0.7 L5 5 L0.7 9.3" fill="none" stroke="#a7a9ab" stroke-width="1.3"/></svg>
<svg style="left:59px;top:886px" width="7" height="10"><path d="M0.7 0.7 L5 5 L0.7 9.3" fill="none" stroke="#a7a9ab" stroke-width="1.3"/></svg>
<div class="r" style="left:90px;top:743px">jscrash</div>
<div class="a" style="left:51px;top:762px;width:310px;height:20px;background:#0d293e"></div>
<div class="r" style="left:109px;top:763px;color:#c8c8c8">2024-05-16 22:24:37</div>
<div class="r" style="left:141px;top:723px">.jscrashtrigger</div>
<div class="a" style="left:69px;top:666px;width:173px;height:57px;background:#ffffff"></div>
<div class="a" style="left:68px;top:722px;width:74px;height:19px;background:#ffffff"></div>
<div class="a" style="left:70px;top:786px;width:170px;height:117px;background:#ffffff"></div>
<div class="a" style="left:365px;top:581px;width:1532px;height:414px;background:#2b2b2b"></div>
<div class="ln m" style="left:375px;top:582px;color:#bbbbbb">Device info:</div>
<div class="ln m" style="left:375px;top:604px;color:#bbbbbb">Build info:</div>
<div class="ln m" style="left:375px;top:626px;color:#bbbbbb">Fingerprint:98448fd7ef4b2e7953ffd650c4eb25b1ff45463969c344e546348d356bb8b642</div>
<div class="ln m" style="left:375px;top:648px;color:#eb6157">Module name:          .jscrashtrigger</div>
<div class="ln m" style="left:375px;top:670px;color:#bbbbbb">Version:1.0.0</div>
<div class="ln m" style="left:375px;top:692px;color:#bbbbbb">VersionCode:1000000</div>
<div class="ln m" style="left:375px;top:714px;color:#bbbbbb">PreInstalled:No</div>
<div class="ln m" style="left:375px;top:736px;color:#bbbbbb">Foreground:No</div>
<div class="ln m" style="left:375px;top:758px;color:#eb6157">Pid:21424</div>
<div class="ln m" style="left:375px;top:780px;color:#bbbbbb">Uid:20020147</div>
<div class="ln m" style="left:375px;top:802px;color:#bbbbbb">Reason:Error</div>
<div class="ln m" style="left:375px;top:824px;color:#bbbbbb">Error name:Error</div>
<div class="ln m" style="left:375px;top:846px;color:#eb6157">Error message:TEST JS ERROR</div>
<div class="ln m" style="left:375px;top:868px;color:#eb6157">SourceCode:</div>
<div class="ln m" style="left:375px;top:890px;color:#eb6157">                throw new Error(&quot;TEST JS ERROR&quot;);</div>
<div class="ln m" style="left:375px;top:912px;color:#eb6157">                      ^</div>
<div class="ln m" style="left:375px;top:934px;color:#eb6157">Stacktrace:</div>
<div class="ln m" style="left:375px;top:956px;color:#eb6157">    at anonymous <span style="color:#5394ec;text-decoration:underline;text-underline-offset:2px">(entry/src/main/ets/pages/Index.ets:17:17)</span></div>
<div class="a" style="left:467px;top:583px;width:149px;height:18px;background:#ffffff"></div>
<div class="a" style="left:462px;top:604px;width:296px;height:20px;background:#ffffff"></div>
<div class="a" style="left:470px;top:647px;width:81px;height:21px;background:#ffffff"></div>
<div class="a" style="left:490px;top:884px;width:300px;height:48px;border:2px solid #e8141c"></div>
<div class="a" style="left:1888px;top:582px;width:8px;height:409px;background:#4e4e4e"></div>
<!-- STRIPES / BOTTOM -->
<div class="a" style="left:21px;top:58px;width:1px;height:938px;background:#323436"></div>
<div class="a" style="left:1898px;top:58px;width:22px;height:938px;background:#3c3f41"></div>
<div class="a" style="left:1897px;top:58px;width:1px;height:938px;background:#2f3133"></div>
<svg style="left:1902px;top:68px" width="14" height="15" viewBox="0 0 14 15"><path d="M7 1.5 C3.8 1.5 2.8 4 2.8 6.5 V9 L0.8 11.5 H13.2 L11.2 9 V6.5 C11.2 4 10.2 1.5 7 1.5 Z" fill="#afb1b3"/><path d="M5.2 12.5 Q7 14.8 8.8 12.5 Z" fill="#afb1b3"/><circle cx="10.8" cy="3.6" r="2.8" fill="#db4f4a" stroke="#3c3f41" stroke-width="0.8"/></svg>
<div class="t" style="left:1916px;top:87px;font-size:12px;color:#bbbbbb;transform-origin:0 0;transform:rotate(90deg)">Notifications</div>
<svg style="left:1902px;top:178px" width="14" height="9" viewBox="0 0 14 9"><path d="M0.5 4.5 Q7 -2.5 13.5 4.5 Q7 11.5 0.5 4.5 Z" fill="#afb1b3"/><circle cx="7" cy="4.5" r="2.4" fill="#3c3f41"/><circle cx="7" cy="4.5" r="1.2" fill="#afb1b3"/></svg>
<div class="t" style="left:1916px;top:191px;font-size:12px;color:#bbbbbb;transform-origin:0 0;transform:rotate(90deg)">Previewer</div>
<svg style="left:1903px;top:864px" width="11" height="13" viewBox="0 0 11 13"><rect x="1" y="1" width="9" height="11" rx="1" fill="none" stroke="#afb1b3" stroke-width="1.5"/></svg>
<div class="t" style="left:1916px;top:882px;font-size:11.5px;color:#bbbbbb;transform-origin:0 0;transform:rotate(90deg)">Device File Browser</div>
<svg style="left:7px;top:877px" width="9" height="9" viewBox="0 0 9 9"><rect x="0" y="5" width="4" height="4" fill="#afb1b3"/><rect x="5" y="5" width="4" height="4" fill="#afb1b3"/><rect x="5" y="0" width="4" height="4" fill="#afb1b3"/></svg>
<div class="t" style="left:5px;top:870px;font-size:12px;color:#bbbbbb;transform-origin:0 0;transform:rotate(-90deg)">Structure</div>
<svg style="left:7px;top:972px" width="9" height="12" viewBox="0 0 9 12"><path d="M0 0 H9 V12 L4.5 8 L0 12 Z" fill="#afb1b3"/></svg>
<div class="t" style="left:5px;top:966px;font-size:11.5px;color:#bbbbbb;transform-origin:0 0;transform:rotate(-90deg)">Bookmarks</div>
<div class="a" style="left:0;top:996px;width:1920px;height:1px;background:#2f3133"></div>
<div class="a" style="left:0;top:997px;width:1920px;height:22px;background:#3c3f41"></div>
<div class="a" style="left:438px;top:997px;width:55px;height:22px;background:#2d2f30"></div>
<div class="a" style="left:0;top:1019px;width:1920px;height:1px;background:#494744"></div>
<div class="t" style="left:51px;top:1001px;font-size:12px;color:#bbbbbb">Version Control</div>
<div class="t" style="left:170px;top:1001px;font-size:12px;color:#bbbbbb">Run</div>
<div class="t" style="left:227px;top:1001px;font-size:12px;color:#bbbbbb">TODO</div>
<div class="t" style="left:296px;top:1001px;font-size:12px;color:#bbbbbb">Problems</div>
<div class="t" style="left:383px;top:1001px;font-size:12px;color:#bbbbbb">Terminal</div>
<div class="t" style="left:465px;top:1001px;font-size:12px;color:#e8e8e8">Log</div>
<div class="t" style="left:522px;top:1001px;font-size:12px;color:#bbbbbb">Code Linter</div>
<div class="t" style="left:622px;top:1001px;font-size:12px;color:#bbbbbb">Profiler</div>
<div class="t" style="left:698px;top:1001px;font-size:12px;color:#bbbbbb">Services</div>
<div class="t" style="left:776px;top:1001px;font-size:12px;color:#bbbbbb">Build</div>
<div class="t" style="left:843px;top:1001px;font-size:12px;color:#bbbbbb">ArkUI Inspector</div>
<svg style="left:36px;top:1003px" width="9" height="12" viewBox="0 0 9 12"><circle cx="2" cy="1.6" r="1.5" fill="#afb1b3"/><circle cx="2" cy="10.4" r="1.5" fill="#afb1b3"/><circle cx="7.5" cy="3" r="1.4" fill="#afb1b3"/><path d="M2 1.6 V10.4 M2 9 Q7.5 8 7.5 3" fill="none" stroke="#afb1b3" stroke-width="1.4"/></svg>
<svg style="left:155px;top:1004px" width="9" height="10" viewBox="0 0 9 10"><path d="M0 0 L8.5 5 L0 10 Z" fill="#afb1b3"/></svg>
<svg style="left:212px;top:1003px" width="11" height="10" viewBox="0 0 11 10"><path d="M0 0.5 H2 V2.5 H0 Z M0 4 H2 V6 H0 Z M0 7.5 H2 V9.5 H0 Z M3.5 0.8 H11 V2.2 H3.5 Z M3.5 4.3 H11 V5.7 H3.5 Z M3.5 7.8 H11 V9.2 H3.5 Z" fill="#afb1b3"/></svg>
<svg style="left:281px;top:1003px" width="11" height="11" viewBox="0 0 11 11"><circle cx="5.5" cy="5.5" r="5.5" fill="#afb1b3"/><path d="M5.5 2 V6.5" stroke="#3c3f41" stroke-width="1.6"/><circle cx="5.5" cy="8.5" r="0.9" fill="#3c3f41"/></svg>
<svg style="left:367px;top:1003px" width="12" height="11" viewBox="0 0 12 11"><rect x="0" y="0" width="12" height="11" fill="#afb1b3"/><path d="M2 2.5 L5 5 L2 7.5 M5.5 8.5 H9.5" fill="none" stroke="#3c3f41" stroke-width="1.3"/></svg>
<svg style="left:448px;top:1002px" width="13" height="13" viewBox="0 0 13 13"><rect x="0.5" y="1.5" width="12" height="11" fill="#afb1b3"/><path d="M3 0 V3 M10 0 V3" stroke="#afb1b3" stroke-width="1.5"/><path d="M2.5 5 H10.5 M2.5 7.5 H10.5 M2.5 10 H7.5" stroke="#2d2f30" stroke-width="1.2"/></svg>
<svg style="left:505px;top:1002px" width="14" height="14" viewBox="0 0 14 14"><circle cx="6" cy="6" r="5" fill="none" stroke="#afb1b3" stroke-width="1.8"/><path d="M9.5 9.5 L13 13" stroke="#afb1b3" stroke-width="2"/><path d="M4.5 4 L3 6 L4.5 8 M7.5 4 L9 6 L7.5 8" fill="none" stroke="#afb1b3" stroke-width="1.1"/></svg>
<svg style="left:603px;top:1002px" width="14" height="14" viewBox="0 0 14 14"><path d="M0 6 L14 0 L9 14 L7 8 Z" fill="#afb1b3"/><path d="M7 8 L14 0" stroke="#3c3f41" stroke-width="1"/></svg>
<svg style="left:681px;top:1002px" width="13" height="13" viewBox="0 0 13 13"><path d="M6.5 0 L12.2 3.25 V9.75 L6.5 13 L0.8 9.75 V3.25 Z" fill="#afb1b3"/><path d="M5 3.8 L9.2 6.5 L5 9.2 Z" fill="#3c3f41"/></svg>
<svg style="left:759px;top:1002px" width="13" height="13" viewBox="0 0 13 13"><path d="M1 3 L4 0 L7.5 2.5 L6 4 Z" fill="#afb1b3"/><path d="M4.5 3.5 L12 11.5" stroke="#afb1b3" stroke-width="2.2"/></svg>
<svg style="left:826px;top:1002px" width="13" height="13" viewBox="0 0 13 13"><path d="M0 0 H13 V13 H0 Z M1.5 3.5 V11.5 H4.5 V3.5 Z M6 3.5 V5.5 H11.5 V3.5 Z M6 7 V9 H11.5 V7 Z M6 10.5 V11.5 H11.5 V10.5 Z" fill="#afb1b3" fill-rule="evenodd"/></svg>
<div class="a" style="left:0;top:1020px;width:1920px;height:20px;background:#3c3f41"></div>
<svg style="left:6px;top:1024px" width="13" height="13" viewBox="0 0 13 13"><rect x="3.5" y="0.5" width="9" height="9" fill="none" stroke="#afb1b3"/><path d="M0.5 3 V12.5 H10" fill="none" stroke="#afb1b3"/></svg>
<div class="t" style="left:27px;top:1022px;letter-spacing:0.155px">App Launch: No signature is configured.Configure a signature by referring to the following link. // Open signing configs (6 minutes ago)</div>
<div class="a" style="left:1611px;top:1024px;width:12px;height:12px;border-radius:50%;background:#3aa33a"></div>
<div class="t" style="left:1635px;top:1022px">17:11 (32 chars)</div>
<div class="t" style="left:1739px;top:1022px">LF</div>
<div class="t" style="left:1763px;top:1022px">UTF-8</div>
<div class="t" style="left:1809px;top:1022px">2 spaces</div>
<div class="a" style="left:1873px;top:1030px;width:9px;height:7px;background:#afb1b3"></div>
<div class="a" style="left:1838px;top:1005px;width:82px;height:26px;background:#ffffff;border-radius:2px;border:1px solid #b9cde6"></div>
<div class="a" style="left:1897px;top:1030px;width:12px;height:12px;border-radius:50%;background:#4a4d50;z-index:0"></div>
<svg style="left:1812px;top:999px" width="36" height="34" viewBox="0 0 36 34"><defs><linearGradient id="sgg" x1="0" y1="0" x2="0" y2="1"><stop offset="0" stop-color="#f47a3a"/><stop offset="1" stop-color="#ea4a14"/></linearGradient></defs><g transform="rotate(-16 17.5 17)"><rect x="4.5" y="4" width="26" height="26" rx="4" fill="url(#sgg)"/></g><path d="M26 9.5 Q15 7.5 9 11.5 Q5.5 14.5 10 16.8 Q16 18 22 18.5 Q26 20 22 22.5 Q16 26 10 24.5" fill="none" stroke="#ffffff" stroke-width="5" stroke-linecap="round"/><path d="M24.5 11.8 Q16 10.5 11.5 13.3 M11.5 22.5 Q16 23.5 21 21" fill="none" stroke="#ee5a22" stroke-width="1.1" stroke-linecap="round"/></svg>
<svg style="left:1852px;top:1011px" width="15" height="15" viewBox="0 0 15 15"><path d="M0.5 2.6 H14 M4.3 0.3 V4.6 M10.2 0.3 V4.6 M2.6 9.6 V6.2 H11.9 V9.6 M7.25 4.6 V9.8 M0.3 9.8 H14.2 M7.25 9.8 Q5.5 13 0.8 14.2 M7.25 9.8 Q9 13 13.7 14.2" fill="none" stroke="#0a64d8" stroke-width="1.7"/></svg>
<svg style="left:1876px;top:1012px" width="16" height="14" viewBox="0 0 16 14"><path d="M4 0.5 H12 Q15.5 0.5 15.5 5 Q15.5 8 13.5 8.5 Q15.5 10 15 12.5 Q14 13.5 12 12.5 L10.5 9 H5.5 L4 12.5 Q2 13.5 1 12.5 Q0.5 10 2.5 8.5 Q0.5 8 0.5 5 Q0.5 0.5 4 0.5 Z" fill="#0a64d8"/><path d="M2.8 5 H6.6 M4.7 3.1 V6.9" stroke="#fff" stroke-width="1.3"/><circle cx="10.8" cy="3.8" r="1" fill="#fff"/><circle cx="12.5" cy="5.6" r="1" fill="#fff"/></svg>
<svg style="left:1900px;top:1010px" width="16" height="17" viewBox="0 0 16 17"><path d="M8 0.5 L10.5 4 L14.8 4.3 L13 8.5 L14.8 12.7 L10.5 13 L8 16.5 L5.5 13 L1.2 12.7 L3 8.5 L1.2 4.3 L5.5 4 Z" fill="#0a64d8"/><circle cx="8" cy="7.5" r="2.2" fill="#fff"/><path d="M8 9 V15" stroke="#fff" stroke-width="1.1"/></svg>
<svg style="left:0;top:0;z-index:10" width="1920" height="1040" viewBox="0 0 1920 1040"><path d="M710.8 866.5 Q712.5 869 714.3 866.3 L665 482 L658.3 483 Z" fill="#e8161e"/><path d="M659.4 463 L652.8 484.5 L670.8 481.3 Z" fill="#e8161e" stroke="#e8161e" stroke-width="0.8" stroke-linejoin="round"/></svg>
</body></html>
